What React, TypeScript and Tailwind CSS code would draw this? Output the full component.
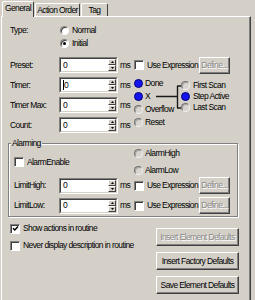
import type { ReactNode } from "react";

const FONT = "font-['Liberation_Sans',Arial,sans-serif]";

function Radio({ on, blue }: { on?: boolean; blue?: boolean }) {
  if (!blue) {
    return (
      <span className="flex h-[9px] w-[9px] shrink-0 items-center justify-center rounded-full border border-t-[#808080] border-l-[#808080] border-r-white border-b-white bg-white shadow-[inset_1px_1px_0_#404040]">
        {on && <span className="h-[3px] w-[3px] rounded-full bg-black" />}
      </span>
    );
  }
  if (on) {
    return <span className="h-[9px] w-[9px] shrink-0 rounded-full border border-[#00007a] bg-[#1414ee]" />;
  }
  return (
    <span className="h-[9px] w-[9px] shrink-0 rounded-full border border-t-[#707070] border-l-[#707070] border-r-[#f0f0f0] border-b-[#f0f0f0] bg-[#d8d5ce] shadow-[inset_1px_1px_0_#a8a8a8]" />
  );
}

function Check({ on }: { on?: boolean }) {
  return (
    <span className="flex h-[10px] w-[10px] shrink-0 items-center justify-center border border-t-[#808080] border-l-[#808080] border-r-white border-b-white bg-white shadow-[inset_1px_1px_0_#404040]">
      {on && (
        <svg width="7" height="7" viewBox="0 0 7 7">
          <path d="M1 3.2 L2.8 5 L6 1.5" fill="none" stroke="#000" strokeWidth="1.5" />
        </svg>
      )}
    </span>
  );
}

function SpinBtn({ up }: { up?: boolean }) {
  return (
    <div className="flex flex-1 items-center justify-center border border-t-white border-l-white border-r-[#404040] border-b-[#404040] bg-[#d4d0c8]">
      <svg width="3" height="2" viewBox="0 0 3 2">
        <polygon points={up ? "1.5,0 3,2 0,2" : "0,0 3,0 1.5,2"} fill="#000" />
      </svg>
    </div>
  );
}

function Spin({ caret }: { caret?: boolean }) {
  return (
    <div className="flex h-[16px] w-[59px] shrink-0 border border-t-[#808080] border-l-[#808080] border-r-white border-b-white">
      <div className="flex flex-1 border border-t-[#404040] border-l-[#404040] border-r-[#d4d0c8] border-b-[#d4d0c8] bg-white">
        <div className="flex flex-1 items-center pl-[2px]">
          {caret && <span className="h-[10px] w-px bg-black" />}
          <span>0</span>
        </div>
        <div className="flex w-[8px] flex-col">
          <SpinBtn up />
          <SpinBtn />
        </div>
      </div>
    </div>
  );
}

function Btn({ children, disabled, className = "" }: { children: ReactNode; disabled?: boolean; className?: string }) {
  return (
    <div
      className={`flex shrink-0 items-center justify-center whitespace-nowrap border border-t-white border-l-white border-r-[#404040] border-b-[#404040] shadow-[inset_-1px_-1px_0_#808080] ${
        disabled ? "text-[#8a8a8a] [text-shadow:1px_1px_0_#fff]" : ""
      } ${className}`}
    >
      {children}
    </div>
  );
}

function ExprRow({ label, labelW }: { label: string; labelW: string }) {
  return (
    <div className="flex h-[17px] items-center">
      <div className={labelW}>{label}</div>
      <Spin />
      <div className="w-[15px] pl-[2px]">ms</div>
      <div className="flex w-[66px] items-center pl-[1px]">
        <Check />
        <span className="ml-[3px] whitespace-nowrap">Use Expression</span>
      </div>
      <Btn disabled className="h-[17px] w-[31px]">
        Define...
      </Btn>
    </div>
  );
}

function Field({ label, caret }: { label: string; caret?: boolean }) {
  return (
    <div className="flex h-[16px] items-center">
      <div className="w-[49px]">{label}</div>
      <Spin caret={caret} />
      <div className="w-[15px] pl-[2px]">ms</div>
    </div>
  );
}

export default function App() {
  return (
    <div
      className={`h-[300px] w-[255px] overflow-hidden bg-[#d4d0c8] text-[8.5px] leading-[11px] tracking-[-0.6px] text-black ${FONT}`}
    >
      <div className="relative z-10 -mb-px flex h-[17px] items-end pl-[2px]">
        <div className="flex h-[16px] w-[32px] items-center justify-center rounded-t-[2px] border-l border-t border-r border-l-white border-t-white border-r-[#404040] bg-[#d4d0c8] pb-[2px]">
          General
        </div>
        <div className="mb-px ml-px flex h-[13px] w-[45px] items-center justify-center rounded-t-[2px] border-l border-t border-r border-l-white border-t-white border-r-[#404040]">
          Action Order
        </div>
        <div className="mb-px ml-px flex h-[13px] w-[27px] items-center justify-center rounded-t-[2px] border-l border-t border-r border-l-white border-t-white border-r-[#404040]">
          Tag
        </div>
      </div>

      <div className="ml-px h-[290px] w-[250px] border-l border-t border-r border-l-white border-t-white border-r-[#404040] pl-[8px] pt-[7px] shadow-[inset_-1px_0_0_#808080]">
        {/* type */}
        <div className="flex">
          <div className="flex h-[13px] w-[50px] items-center">Type:</div>
          <div className="flex flex-col">
            <div className="flex h-[13px] items-center gap-[3px]">
              <Radio />
              <span>Normal</span>
            </div>
            <div className="flex h-[13px] items-center gap-[3px]">
              <Radio on />
              <span>Initial</span>
            </div>
          </div>
        </div>

        <div className="mt-[6px] flex h-[18px] items-center">
          <div className="w-[49px]">Preset:</div>
          <Spin />
          <div className="w-[15px] pl-[2px]">ms</div>
          <div className="flex w-[66px] items-center pl-[1px]">
            <Check />
            <span className="ml-[3px] whitespace-nowrap">Use Expression</span>
          </div>
          <Btn disabled className="h-[17px] w-[31px]">
            Define...
          </Btn>
        </div>

        <div className="mt-[3px] flex">
          <div className="flex w-[123px] flex-col gap-[4px]">
            <Field label="Timer:" caret />
            <Field label="Timer Max:" />
            <Field label="Count:" />
          </div>
          <div className="flex">
            <div className="flex w-[23px] flex-col">
              {[
                ["Done", true],
                ["X", true],
                ["Overflow", false],
                ["Reset", false],
              ].map(([t, on]) => (
                <div key={t as string} className="flex h-[13px] items-center gap-[2px] whitespace-nowrap pl-[1px]">
                  <Radio blue on={on as boolean} />
                  <span>{t as string}</span>
                </div>
              ))}
            </div>
            <svg className="mt-[8px] shrink-0" width="25" height="24" viewBox="0 0 25 24">
              <path d="M0 11.5 H21.5 M21.5 1 V23 M21 1 H25 M21 23 H25" fill="none" stroke="#1a1a1a" strokeWidth="1.4" />
            </svg>
            <div className="mt-[3px] flex flex-col">
              {[
                ["First Scan", false],
                ["Step Active", true],
                ["Last Scan", false],
              ].map(([t, on]) => (
                <div key={t as string} className="flex h-[11px] items-center gap-[3px] whitespace-nowrap">
                  <Radio blue on={on as boolean} />
                  <span>{t as string}</span>
                </div>
              ))}
            </div>
          </div>
        </div>

        {/* alarming */}
        <div className="relative -ml-[2px] mt-[10px] w-[230px] border border-[#808080] pb-[2px] shadow-[inset_1px_1px_0_#fff,1px_1px_0_#fff]">
          <span className="absolute -top-[6px] left-[2px] bg-[#d4d0c8] px-px">Alarming</span>
          <div className="flex pt-[3px]">
            <div className="flex w-[124px] items-center gap-[3px] pl-[5px]">
              <Check />
              <span>AlarmEnable</span>
            </div>
            <div className="flex flex-col gap-[4px]">
              <div className="flex h-[13px] items-center gap-[2px] pl-[1px]">
                <Radio blue />
                <span>AlarmHigh</span>
              </div>
              <div className="flex h-[13px] items-center gap-[2px] pl-[1px]">
                <Radio blue />
                <span>AlarmLow</span>
              </div>
            </div>
          </div>
          <div className="flex flex-col gap-[3px] pl-[5px]">
            <ExprRow label="LimitHigh:" labelW="w-[45px]" />
            <ExprRow label="LimitLow:" labelW="w-[45px]" />
          </div>
        </div>

        {/* bottom */}
        <div className="mt-[4px] flex">
          <div className="flex w-[146px] flex-col gap-[2px]">
            <div className="flex h-[15px] items-center gap-[3px] whitespace-nowrap">
              <Check on />
              <span>Show actions in routine</span>
            </div>
            <div className="flex h-[15px] items-center gap-[3px] whitespace-nowrap">
              <Check />
              <span>Never display description in routine</span>
            </div>
          </div>
          <div className="flex flex-col gap-[6px] pt-[7px]">
            <Btn disabled className="h-[18px] w-[83px]">
              Insert Element Defaults
            </Btn>
            <Btn className="h-[18px] w-[83px]">Insert Factory Defaults</Btn>
            <Btn className="h-[18px] w-[83px]">Save Element Defaults</Btn>
          </div>
        </div>
      </div>
    </div>
  );
}
